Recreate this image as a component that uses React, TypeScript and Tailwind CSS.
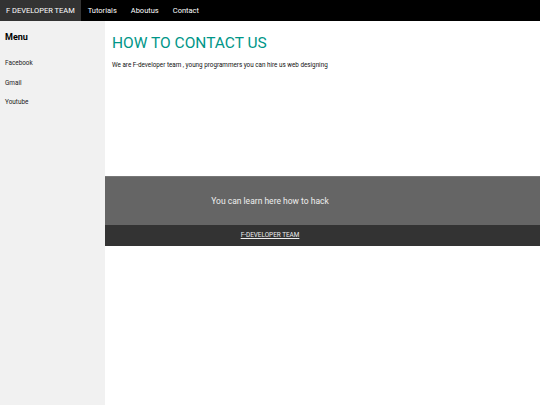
const navLinks = ["Tutorials", "Aboutus", "Contact"];
const sideLinks = ["Facebook", "Gmail", "Youtube"];

const App = () => {
  return (
    <div className="min-h-[405px] flex flex-col bg-white font-['Roboto',sans-serif] text-black">
      {/* Top bar */}
      <div className="h-[21px] flex bg-black text-[7.5px] text-white">
        <div className="flex items-center bg-[#333] px-[6px]">F DEVELOPER TEAM</div>
        {navLinks.map((link) => (
          <div key={link} className="flex items-center px-[7px]">
            {link}
          </div>
        ))}
      </div>

      <div className="flex flex-1">
        {/* Sidebar */}
        <div className="w-[105px] shrink-0 bg-[#f1f1f1] pt-[6px]">
          <div className="h-[20px] leading-[20px] px-[5px] text-[9px] font-bold">Menu</div>
          <div className="mt-[7px]">
            {sideLinks.map((link) => (
              <div key={link} className="h-[19.5px] leading-[19.5px] px-[5px] text-[6.4px] text-[#222]">
                {link}
              </div>
            ))}
          </div>
        </div>

        {/* Main */}
        <div className="flex-1">
          <div className="h-[155px] pl-[7px] pt-[12px]">
            <h1 className="text-[15.5px] leading-[20px] text-[#009688]">HOW TO CONTACT US</h1>
            <p className="mt-[7px] text-[6.3px] leading-[10px] text-[#111]">
              We are F-developer team , young programmers you can hire us web designing
            </p>
          </div>

          <div className="h-[49px] flex items-center justify-center pr-[105px] bg-[#656565] border-t border-[#777] text-[8.5px] text-[#eee]">
            You can learn here how to hack
          </div>
          <div className="h-[21px] flex items-center justify-center pr-[105px] bg-[#333] text-[6.4px] text-[#eee]">
            <span className="underline">F-DEVELOPER TEAM</span>
          </div>
        </div>
      </div>
    </div>
  );
};

export default App;
